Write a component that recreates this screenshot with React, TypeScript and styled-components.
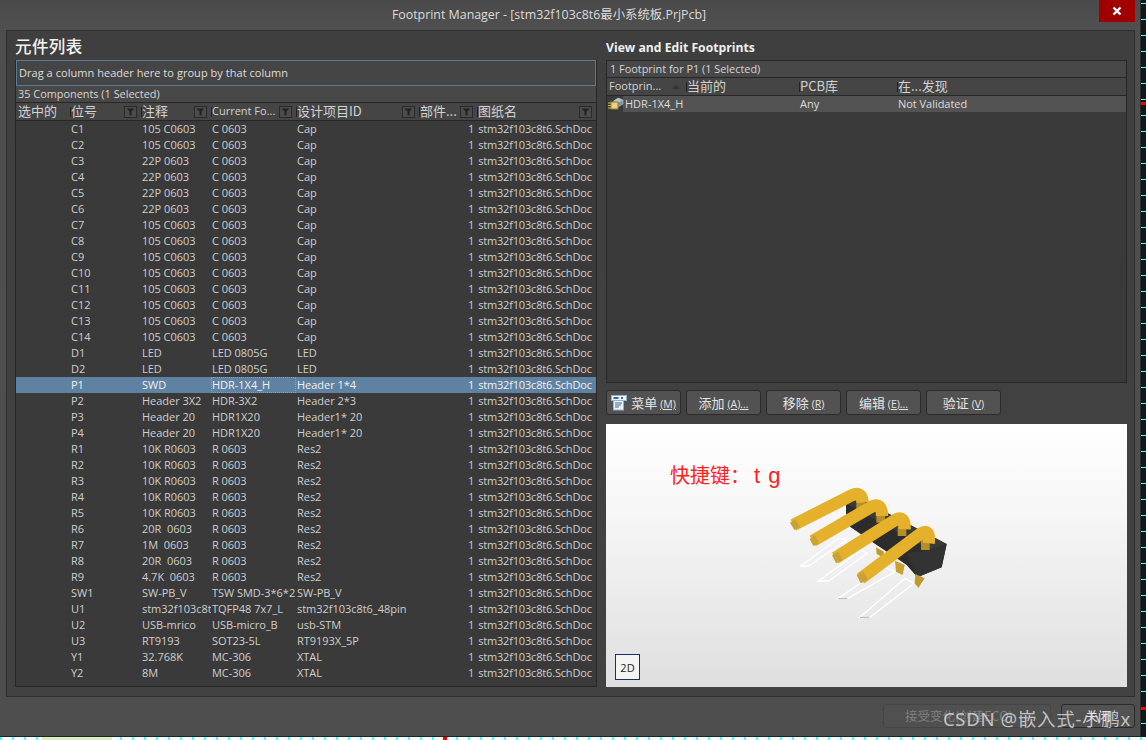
import React from "react";
import styled, { createGlobalStyle } from "styled-components";

const Global = createGlobalStyle`
  html, body { margin: 0; padding: 0; width: 1146px; height: 740px; overflow: hidden; background: #202a2a; }
  #root { width: 1146px; height: 740px; }
  * { box-sizing: border-box; }
`;

const uiFont = `"Open Sans", "Noto Sans CJK SC", sans-serif`;
const cols = "54px 71px 70px 85px 123px 58px 1fr";
const rightCols = "79px 113px 98px 1fr";

const Page = styled.div`
  width: 1146px;
  height: 740px;
  display: flex;
  flex-direction: column;
  position: relative;
  background-color: #10181a;
  background-image:
    linear-gradient(#f00, #f00),
    linear-gradient(#f00, #f00),
    repeating-linear-gradient(0deg, #5ff 0 1px, transparent 1px 16px);
  background-size: 5px 3px, 5px 3px, 100% 100%;
  background-position: right 0 top 102px, right 0 top 707px, 0 0;
  background-repeat: no-repeat;
  font: 11px/16px ${uiFont};
  color: #d6d6d6;
`;
const Window = styled.div`
  width: 1141px;
  height: 737px;
  flex: none;
  display: flex;
  flex-direction: column;
  background: #4e4e4e;
  border-right: 1px solid #2e2e2e;
  border-bottom: 1px solid #222;
`;
const BottomStrip = styled.div`
  flex: 1;
  background-color: #f2fffb;
  background-image:
    linear-gradient(#f00, #f00),
    linear-gradient(#d8f0c0, #d8f0c0),
    repeating-linear-gradient(90deg, #4ff 0 2px, transparent 2px 12px);
  background-size: 4px 3px, 70px 3px, 100% 100%;
  background-position: 443px 0, 42px 0, 0 0;
  background-repeat: no-repeat;
`;
const TitleBar = styled.div`
  height: 30px;
  flex: none;
  display: flex;
  align-items: center;
  justify-content: center;
  position: relative;
  padding-right: 42px;
  font-size: 12.4px;
  color: #dcdcdc;
  background: linear-gradient(#4a4a4a, #505050);
`;
const CloseBtn = styled.div`
  position: absolute;
  top: 0;
  right: 5px;
  width: 36px;
  height: 22px;
  background: #a00000;
  display: flex;
  align-items: center;
  justify-content: center;
`;
const Body = styled.div`
  height: 667px;
  margin: 0 5px 0 6px;
  padding: 8px 8px 9px 8px;
  flex: none;
  display: flex;
  gap: 9px;
  background: linear-gradient(#3f3f3f, #424242);
  border: 1px solid #2e2e2e;
`;
const LeftPane = styled.div`
  width: 582px;
  flex: none;
  display: flex;
  flex-direction: column;
`;
const RightPane = styled.div`
  width: 521px;
  flex: none;
  display: flex;
  flex-direction: column;
`;
const CnHeading = styled.h2`
  margin: -2px 0 2px;
  height: 21px;
  font: 500 16.5px/19px "Noto Sans CJK SC", sans-serif;
  color: #f2f2f2;
  letter-spacing: 0.4px;
`;
const EnHeading = styled.h2`
  margin: 0;
  height: 21px;
  font: 700 12.2px/17px ${uiFont};
  color: #f0f0f0;
`;
const GridFrame = styled.div`
  height: 627px;
  display: flex;
  flex-direction: column;
  border: 1px solid #272727;
  border-top: none;
  background: #3a3a3a;
`;
const GroupBox = styled.div`
  height: 26px;
  padding-left: 2px;
  line-height: 24px;
  font-size: 11px;
  letter-spacing: 0.04px;
  border: 1px solid #5d7a96;
  background: #454545;
  color: #dedede;
`;
const CountBar = styled.div`
  height: 17px;
  padding-left: 2px;
  line-height: 16px;
  background: #484848;
  border-bottom: 1px solid #272727;
  font-size: 10.9px;
`;
const HeaderRow = styled.div<{ $cols: string }>`
  height: 18px;
  flex: none;
  display: grid;
  grid-template-columns: ${(p) => p.$cols};
  background: #454545;
  border-bottom: 1px solid #272727;
`;
const HeaderCell = styled.div<{ $cn?: boolean }>`
  position: relative;
  display: flex;
  align-items: center;
  justify-content: space-between;
  padding: 0 4px 0 1px;
  font-family: ${(p) => (p.$cn ? `"Noto Sans CJK SC", sans-serif` : uiFont)};
  font-size: ${(p) => (p.$cn ? "13px" : "11px")};
  line-height: 15px;
  color: #d2d2d2;
  white-space: nowrap;
  & > span:first-child { margin-top: -3px; }
  &::before {
    content: "";
    position: absolute;
    left: 0;
    top: 4px;
    width: 1px;
    height: 10px;
    background: #222;
  }
  &:first-child { padding-left: 2px; }
  &:first-child::before { display: none; }
`;
const FilterBtn = styled.span`
  flex: none;
  width: 13px;
  height: 12px;
  border: 1px solid #2a2a2a;
  background: #4c4c4c;
  display: inline-flex;
  align-items: center;
  justify-content: center;
`;
const Row = styled.div<{ $selected?: boolean }>`
  height: 16px;
  flex: none;
  display: grid;
  grid-template-columns: ${cols};
  background: ${(p) => (p.$selected ? "#5f82a3" : "transparent")};
  color: ${(p) => (p.$selected ? "#f0f0f0" : "#cfcfcf")};
`;
const Cell = styled.div<{ $focus?: boolean }>`
  padding-left: 1px;
  white-space: nowrap;
  overflow: hidden;
  line-height: 15px;
  letter-spacing: -0.03px;
  outline: ${(p) => (p.$focus ? "1px dotted #c69053" : "none")};
  outline-offset: -1px;
`;
const Wide = styled(Cell)`
  overflow: visible;
`;
const SheetCell = styled(Cell)`
  display: flex;
  overflow: visible;
  margin-left: -10px;
  gap: 4px;
  letter-spacing: -0.17px;
`;
const TopBox = styled.div`
  height: 323px;
  flex: none;
  display: flex;
  flex-direction: column;
  background: #3a3a3a;
  border: 1px solid #272727;
`;
const InfoBar = styled.div`
  height: 17px;
  padding-left: 3px;
  line-height: 16px;
  font-size: 10.9px;
  background: #484848;
  border-bottom: 1px solid #272727;
`;
const FootRow = styled.div`
  height: 16px;
  display: grid;
  grid-template-columns: ${rightCols};
  background: #535353;
  color: #dcdcdc;
`;
const FootName = styled.div`
  display: flex;
  align-items: center;
  gap: 1px;
  padding-left: 1px;
  background: linear-gradient(90deg, #3a3a3a 16px, #535353 16px);
`;
const Sort = styled.span`
  width: 0;
  height: 0;
  border: 4px solid transparent;
  border-top: none;
  border-bottom: 4px solid #333;
  margin-right: 2px;
`;
const ButtonRow = styled.div`
  height: 41px;
  flex: none;
  display: flex;
  align-items: flex-start;
  gap: 5px;
  padding-top: 7px;
`;
const Button = styled.div`
  width: 75px;
  height: 25px;
  display: flex;
  align-items: center;
  justify-content: center;
  gap: 3px;
  border: 1px solid #2b2b2b;
  border-radius: 3px;
  background: #525252;
  font: 13px/16px "Noto Sans CJK SC", sans-serif;
  color: #e4e4e4;
  white-space: nowrap;
`;
const Key = styled.span`
  font: 10.5px/14px ${uiFont};
  text-decoration: underline;
  text-decoration-thickness: 1px;
  text-underline-offset: 1px;
`;
const Preview = styled.div`
  position: relative;
  height: 263px;
  flex: none;
  background: linear-gradient(#ffffff, #f6f6f6 35%, #dfdfdf);
`;
const Hint = styled.div`
  position: absolute;
  left: 64px;
  top: 38px;
  font: 20px/26px "Noto Sans CJK SC", sans-serif;
  color: #ff2020;
`;
const Latin = styled.span`
  font-family: "Liberation Sans", sans-serif;
  font-size: 22px;
  letter-spacing: 1px;
  margin-left: 4px;
`;
const TwoD = styled.div`
  position: absolute;
  left: 9px;
  bottom: 7px;
  width: 25px;
  height: 26px;
  border: 1px solid #1a2f66;
  background: #f4f4f4;
  color: #222;
  text-align: center;
  font-size: 11px;
  line-height: 25px;
`;
const Model = styled.svg`
  position: absolute;
  left: 164px;
  top: 46px;
`;
const Footer = styled.div`
  flex: 1;
  display: flex;
  justify-content: flex-end;
  align-items: flex-start;
  gap: 10px;
  padding: 7px 5px 0 0;
`;
const Accept = styled.div`
  width: 168px;
  height: 24px;
  border: 1px solid #454545;
  border-radius: 3px;
  background: #505050;
  padding-left: 21px;
  font: 12.5px/22px "Noto Sans CJK SC", sans-serif;
  color: #808080;
  white-space: nowrap;
`;
const Close = styled.div`
  width: 74px;
  height: 24px;
  border: 1px solid #2b2b2b;
  border-radius: 3px;
  background: #525252;
  text-align: center;
  font: 12.5px/22px "Noto Sans CJK SC", sans-serif;
  color: #e4e4e4;
`;
const Watermark = styled.div`
  position: absolute;
  left: 943px;
  top: 706px;
  font: 18.5px/26px "Noto Sans", "Noto Sans CJK SC", sans-serif;
  color: rgba(222, 222, 222, 0.82);
  letter-spacing: 0.68px;
  white-space: nowrap;
`;

const Funnel = () => (
  <svg width="9" height="8" viewBox="0 0 9 8">
    <path d="M0.5 0.5H8.5L5.5 3.5V7.5H3.5V3.5Z" fill="#222" />
  </svg>
);

const FootprintIcon = () => (
  <svg width="16" height="14" viewBox="0 0 16 14">
    <path d="M5 5L10 1L15 3V7L10 10Z" fill="#7c93a8" stroke="#aebcc8" strokeWidth="0.6" />
    <path d="M10 1L15 3L10 6L5 4Z" fill="#b8c4ce" />
    <rect x="3" y="5" width="7" height="7" fill="#ecd27e" stroke="#8c7a36" />
    <path d="M0 6H3M0 8.5H3M0 11H3" stroke="#d8b84a" />
  </svg>
);

const MenuIcon = () => (
  <svg width="17" height="17" viewBox="0 0 17 17">
    <rect x="0.5" y="1.5" width="15" height="5" fill="#eef3f8" stroke="#8fb3d0" />
    <rect x="2.5" y="3" width="5" height="2" fill="#2f6ea8" />
    <rect x="10" y="3" width="2" height="2" fill="#2f6ea8" />
    <rect x="2.5" y="6.5" width="10" height="9.5" fill="#eef3f8" stroke="#8fb3d0" />
    <path d="M4 9H11M4 11H10M4 13H8" stroke="#2f6ea8" />
  </svg>
);

type Comp = [string, string, string, string];
const data: Comp[] = [
  ["C1", "105 C0603", "C 0603", "Cap"],
  ["C2", "105 C0603", "C 0603", "Cap"],
  ["C3", "22P 0603", "C 0603", "Cap"],
  ["C4", "22P 0603", "C 0603", "Cap"],
  ["C5", "22P 0603", "C 0603", "Cap"],
  ["C6", "22P 0603", "C 0603", "Cap"],
  ["C7", "105 C0603", "C 0603", "Cap"],
  ["C8", "105 C0603", "C 0603", "Cap"],
  ["C9", "105 C0603", "C 0603", "Cap"],
  ["C10", "105 C0603", "C 0603", "Cap"],
  ["C11", "105 C0603", "C 0603", "Cap"],
  ["C12", "105 C0603", "C 0603", "Cap"],
  ["C13", "105 C0603", "C 0603", "Cap"],
  ["C14", "105 C0603", "C 0603", "Cap"],
  ["D1", "LED", "LED 0805G", "LED"],
  ["D2", "LED", "LED 0805G", "LED"],
  ["P1", "SWD", "HDR-1X4_H", "Header 1*4"],
  ["P2", "Header 3X2", "HDR-3X2", "Header 2*3"],
  ["P3", "Header 20", "HDR1X20", "Header1* 20"],
  ["P4", "Header 20", "HDR1X20", "Header1* 20"],
  ["R1", "10K R0603", "R 0603", "Res2"],
  ["R2", "10K R0603", "R 0603", "Res2"],
  ["R3", "10K R0603", "R 0603", "Res2"],
  ["R4", "10K R0603", "R 0603", "Res2"],
  ["R5", "10K R0603", "R 0603", "Res2"],
  ["R6", "20R\u00a0 0603", "R 0603", "Res2"],
  ["R7", "1M\u00a0 0603", "R 0603", "Res2"],
  ["R8", "20R\u00a0 0603", "R 0603", "Res2"],
  ["R9", "4.7K\u00a0 0603", "R 0603", "Res2"],
  ["SW1", "SW-PB_V", "TSW SMD-3*6*2", "SW-PB_V"],
  ["U1", "stm32f103c8t", "TQFP48 7x7_L", "stm32f103c8t6_48pin"],
  ["U2", "USB-mrico", "USB-micro_B", "usb-STM"],
  ["U3", "RT9193", "SOT23-5L", "RT9193X_5P"],
  ["Y1", "32.768K", "MC-306", "XTAL"],
  ["Y2", "8M", "MC-306", "XTAL"],
];

const headers: { label: string; cn?: boolean; filter?: boolean }[] = [
  { label: "选中的", cn: true },
  { label: "位号", cn: true, filter: true },
  { label: "注释", cn: true, filter: true },
  { label: "Current Fo...", filter: true },
  { label: "设计项目ID", cn: true, filter: true },
  { label: "部件...", cn: true, filter: true },
  { label: "图纸名", cn: true, filter: true },
];

const buttons = [
  { cn: "添加", key: "(A)..." },
  { cn: "移除", key: "(R)" },
  { cn: "编辑", key: "(E)..." },
  { cn: "验证", key: "(V)" },
];

const pins = [
  { tip: "M70 165L245 76Q276 62 278 98", leg: "M272 90V122" },
  { tip: "M128 213L305 110Q336 96 336 138", leg: "M332 125V158" },
  { tip: "M196 264L375 150Q406 134 404 178", leg: "M396 165V198" },
  { tip: "M272 326L450 192Q482 172 476 220", leg: "M466 210V240" },
];

const ConnectorModel = () => (
  <Model width="200" height="160" viewBox="0 0 600 480">
    <g fill="none" stroke="#fff" strokeWidth="4">
      <path d="M92 288L205 205L235 207L115 288Z" />
      <path d="M145 333L275 240L292 250L175 333Z" />
      <path d="M205 386L340 290L375 305L232 386Z" />
      <path d="M270 442L405 325L432 340L300 442Z" />
      <path d="M440 350L462 335" />
    </g>
    <path d="M205 386H232M270 442H298" stroke="#aab4bc" strokeWidth="3" />
    <path d="M228 100L262 82L530 222L515 292L442 322L410 285L380 265L320 225L240 170L228 130Z" fill="#2c2c2c" />
    <path d="M228 100L262 82L530 222L478 240Z" fill="#3a3a3a" />
    <path d="M410 250L478 240L530 222L515 292L442 322Z" fill="#333" />
    <path d="M318 232L342 245L338 262L320 252Z" fill="#c09a2c" />
    <path d="M375 272L404 285L398 315L378 305Z" fill="#c8a030" />
    <path d="M436 312L464 325L445 354L434 340Z" fill="#c09a2c" />
    {pins.map((p) => (
      <g key={p.tip} fill="none">
        <path d={p.leg} stroke="#b48f28" strokeWidth="26" />
        <path d={p.tip} stroke="#e5b02a" strokeWidth="37" />
      </g>
    ))}
    <path d="M60 158L73 180L90 172L76 148ZM119 207L130 228L148 220L134 196ZM186 256L198 280L218 271L204 246ZM260 315L272 340L294 330L280 303Z" fill="#c9a237" />
  </Model>
);

export default function App() {
  return (
    <Page>
      <Global />
      <Window>
        <TitleBar>
          Footprint Manager - [stm32f103c8t6最小系统板.PrjPcb]
          <CloseBtn>
            <svg width="10" height="10" viewBox="0 0 10 10">
              <path d="M1.5 1.5L8.5 8.5M8.5 1.5L1.5 8.5" stroke="#fff" strokeWidth="2.4" />
            </svg>
          </CloseBtn>
        </TitleBar>
        <Body>
          <LeftPane>
            <CnHeading>元件列表</CnHeading>
            <GridFrame>
              <GroupBox>Drag a column header here to group by that column</GroupBox>
              <CountBar>35 Components (1 Selected)</CountBar>
              <HeaderRow $cols={cols}>
                {headers.map((h) => (
                  <HeaderCell key={h.label} $cn={h.cn}>
                    <span>{h.label}</span>
                    {h.filter && (
                      <FilterBtn>
                        <Funnel />
                      </FilterBtn>
                    )}
                  </HeaderCell>
                ))}
              </HeaderRow>
              {data.map(([des, comment, fp, id]) => (
                <Row key={des} $selected={des === "P1"}>
                  <Cell />
                  <Cell>{des}</Cell>
                  <Cell>{comment}</Cell>
                  <Cell $focus={des === "P1"}>{fp}</Cell>
                  <Wide>{id}</Wide>
                  <Cell />
                  <SheetCell>
                    <span>1</span>
                    <span>stm32f103c8t6.SchDoc</span>
                  </SheetCell>
                </Row>
              ))}
            </GridFrame>
          </LeftPane>
          <RightPane>
            <EnHeading>View and Edit Footprints</EnHeading>
            <TopBox>
              <InfoBar>1 Footprint for P1 (1 Selected)</InfoBar>
              <HeaderRow $cols={rightCols}>
                <HeaderCell>
                  <span>Footprin...</span>
                  <Sort />
                </HeaderCell>
                <HeaderCell $cn>
                  <span>当前的</span>
                </HeaderCell>
                <HeaderCell $cn>
                  <span>PCB库</span>
                </HeaderCell>
                <HeaderCell $cn>
                  <span>在...发现</span>
                </HeaderCell>
              </HeaderRow>
              <FootRow>
                <FootName>
                  <FootprintIcon />
                  HDR-1X4_H
                </FootName>
                <Cell />
                <Cell>Any</Cell>
                <Cell>Not Validated</Cell>
              </FootRow>
            </TopBox>
            <ButtonRow>
              <Button>
                <MenuIcon />
                <span>
                  菜单 <Key>(M)</Key>
                </span>
              </Button>
              {buttons.map((b) => (
                <Button key={b.cn}>
                  <span>
                    {b.cn} <Key>{b.key}</Key>
                  </span>
                </Button>
              ))}
            </ButtonRow>
            <Preview>
              <Hint>
                快捷键：<Latin>t g</Latin>
              </Hint>
              <ConnectorModel />
              <TwoD>2D</TwoD>
            </Preview>
          </RightPane>
        </Body>
        <Footer>
          <Accept>接受变化(创建ECO)</Accept>
          <Close>关闭</Close>
        </Footer>
      </Window>
      <BottomStrip />
      <Watermark>CSDN @嵌入式-小鹏x</Watermark>
    </Page>
  );
}
